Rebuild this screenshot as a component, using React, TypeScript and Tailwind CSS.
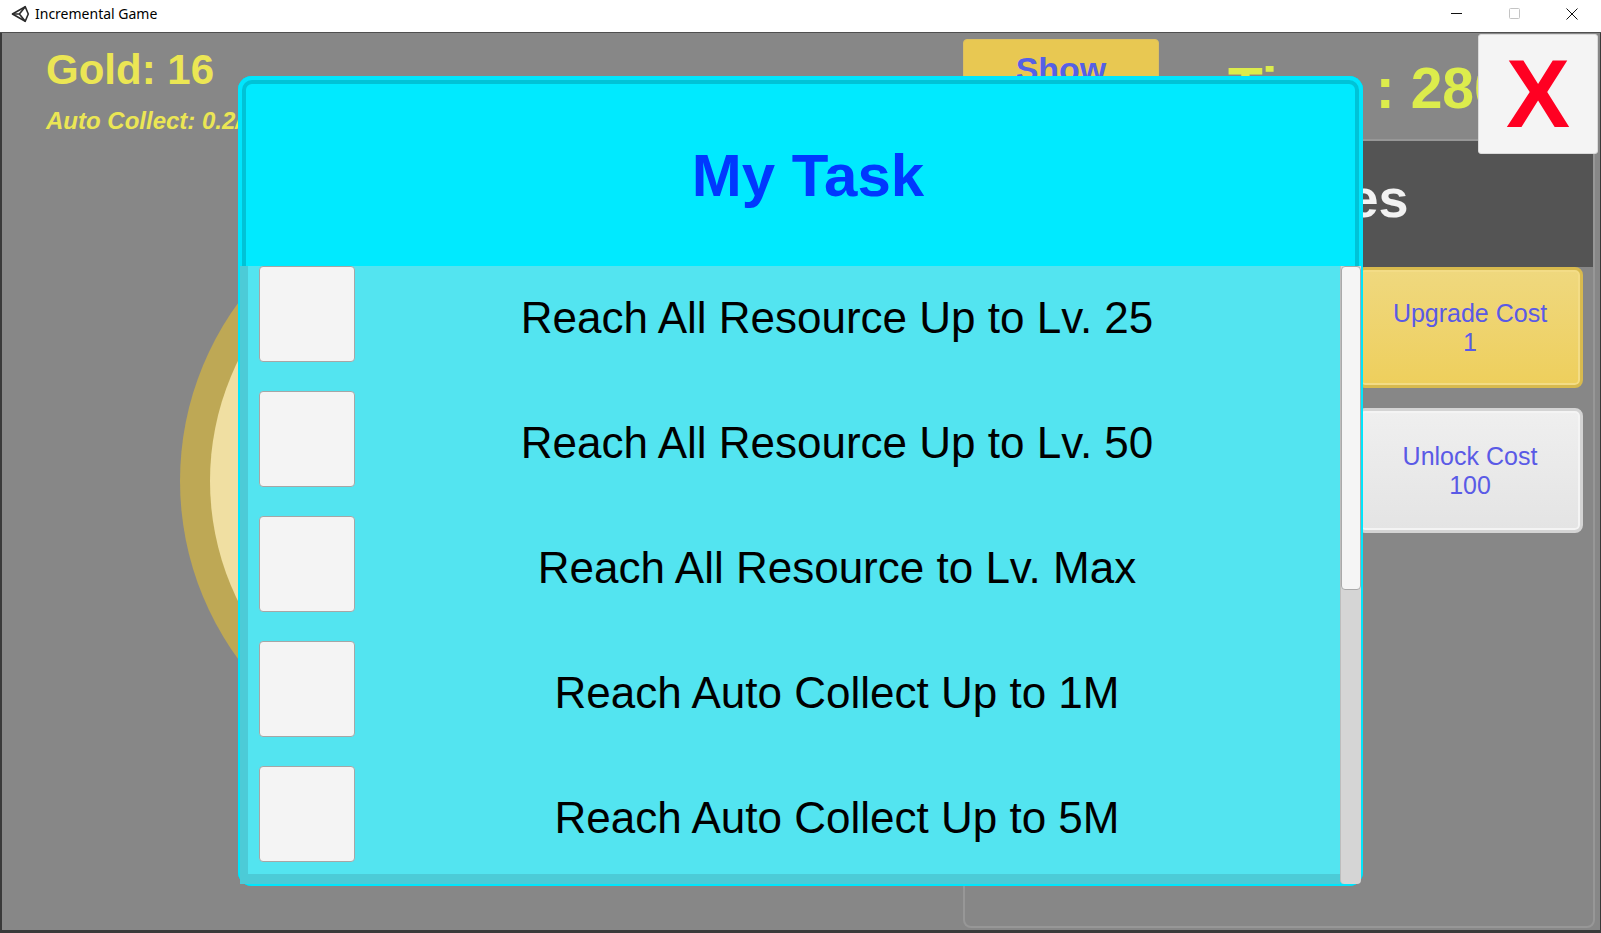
import React from 'react';

const tasks = [
  'Reach All Resource Up to Lv. 25',
  'Reach All Resource Up to Lv. 50',
  'Reach All Resource to Lv. Max',
  'Reach Auto Collect Up to 1M',
  'Reach Auto Collect Up to 5M',
];

function UnityLogo() {
  return (
    <svg width="19" height="18" viewBox="0 0 20 19" fill="none" stroke="#2b2b2b" strokeWidth="1.7" strokeLinejoin="round">
      <path d="M1.5 9.5 L15 1.8 L18.2 9.5 L15 17.2 Z" />
      <path d="M8.8 9.5 L1.5 9.5 M8.8 9.5 L15 1.8 M8.8 9.5 L15 17.2" />
    </svg>
  );
}

function TaskRow({ label }: { label: string }) {
  return (
    <div className="h-[96px] flex items-center">
      <div className="ml-[19px] w-[96px] h-[96px] rounded-[4px] bg-[#f4f4f4] border border-[#a6a6a6]" />
      <div className="flex-1 pr-[21px] pt-[8px] text-center text-[44px] leading-none text-black whitespace-nowrap">
        {label}
      </div>
    </div>
  );
}

export default function App() {
  return (
    <div className="relative w-[1601px] h-[933px] bg-[#3a3a3a] flex flex-col overflow-hidden font-['Liberation_Sans',Arial,sans-serif]">
      {/* window title bar */}
      <div className="h-[33px] bg-white border-b border-[#4f4f4f] flex items-center pb-[5px]">
        <div className="pl-[11px] flex items-center">
          <UnityLogo />
          <span className="ml-[5px] text-[14px] text-black font-['Noto_Sans',sans-serif]">Incremental Game</span>
        </div>
        <div className="ml-auto flex h-full">
          <div className="w-[58px] flex items-center justify-center">
            <svg width="11" height="11" viewBox="0 0 11 11">
              <path d="M0 5.5 H11" stroke="#111" strokeWidth="1" />
            </svg>
          </div>
          <div className="w-[58px] flex items-center justify-center">
            <svg width="11" height="11" viewBox="0 0 11 11" fill="none">
              <rect x="0.5" y="0.5" width="10" height="10" rx="1" stroke="#c4c4c4" strokeWidth="1" />
            </svg>
          </div>
          <div className="w-[58px] flex items-center justify-center">
            <svg width="12" height="12" viewBox="0 0 12 12">
              <path d="M0.5 0.5 L11.5 11.5 M11.5 0.5 L0.5 11.5" stroke="#111" strokeWidth="1" />
            </svg>
          </div>
        </div>
      </div>

      {/* game view */}
      <div className="h-[897px] ml-[2px] mr-[1px] bg-[#878787] flex">
        <div className="w-[961px] flex flex-col pl-[44px] pt-[16px]">
          <div className="text-[42px] leading-none font-bold text-[#ebe654]">Gold: 16</div>
          <div className="mt-[18px] text-[24px] leading-none font-bold italic text-[#ebe654] whitespace-nowrap">
            Auto Collect: 0.2/s
          </div>
          <div className="mt-[46px] ml-[134px] w-[604px] h-[604px] rounded-full bg-[#bea855] flex items-center justify-center">
            <div className="w-[544px] h-[544px] rounded-full bg-[#f0dfa2]" />
          </div>
        </div>

        <div className="w-[632px] flex flex-col pt-[6px]">
          <div className="h-[100px] flex items-start">
            <div className="w-[196px] h-[90px] rounded-[4px] bg-[#e8c852] border border-[#dcc060] flex flex-col items-center pt-[12px] text-[34px] leading-none font-bold text-[#5560e6]">
              <span>Show</span>
            </div>
            <div className="ml-[69px] mt-[21px] text-[57px] leading-none font-bold text-[#dcec4c] whitespace-nowrap">
              Time : 280
            </div>
          </div>
          <div className="h-[789px] rounded-[8px] border-2 border-[#979797] flex flex-col overflow-hidden">
            <div className="h-[126px] bg-[#545454] flex items-center justify-center pl-[10px] pb-[12px] text-[54px] font-bold text-[#f2f2f2]">
              Upgrades
            </div>
            <div className="flex flex-col items-end pr-[10px] gap-[20px]">
              <div className="w-[226px] h-[121px] rounded-[8px] border-[3px] border-[#d8ba4e] bg-linear-to-b from-[#efd87e] to-[#eecf5c] shadow-[inset_0_0_0_2px_#f3dc86] flex flex-col items-center justify-center text-[25px] leading-[29px] text-[#5a5ae6]">
                <span>Upgrade Cost</span>
                <span>1</span>
              </div>
              <div className="w-[226px] h-[125px] rounded-[8px] border-[3px] border-[#d4d4d4] bg-linear-to-b from-[#efefef] to-[#e4e4e4] shadow-[inset_0_0_0_2px_#f4f4f4] flex flex-col items-center justify-center text-[25px] leading-[29px] text-[#5a5ae6]">
                <span>Unlock Cost</span>
                <span>100</span>
              </div>
            </div>
          </div>
        </div>
      </div>

      {/* close button overlay */}
      <div className="absolute left-[1478px] top-[34px] w-[120px] h-[120px] rounded-[3px] bg-[#f4f4f4] border border-[#dadada] flex items-center justify-center text-[96px] leading-none font-bold text-[#ff0022]">
        X
      </div>

      {/* task modal */}
      <div className="absolute left-[238px] top-[76px] w-[1125px] h-[810px] rounded-[14px] bg-[#00eaff] shadow-[inset_0_0_0_4px_#00e6fd,inset_0_0_0_8px_#00c3d7] flex flex-col">
        <div className="h-[190px] flex items-center justify-center pl-[15px] pt-[9px] text-[60px] font-bold text-[#0038ff]">
          My Task
        </div>
        <div className="h-[618px] mx-[2px] flex">
          <div className="flex-1 bg-[#53e4f0] shadow-[inset_8px_-10px_0_0_#4ccbd7] flex flex-col gap-[29px]">
            {tasks.map((t) => (
              <TaskRow key={t} label={t} />
            ))}
          </div>
          <div className="w-[21px] bg-[#d5d5d5] rounded-b-[4px] border-l border-[#bdbdbd]">
            <div className="h-[324px] bg-[#f5f5f5] border border-[#a9a9a9] rounded-[4px]" />
          </div>
        </div>
      </div>
    </div>
  );
}
